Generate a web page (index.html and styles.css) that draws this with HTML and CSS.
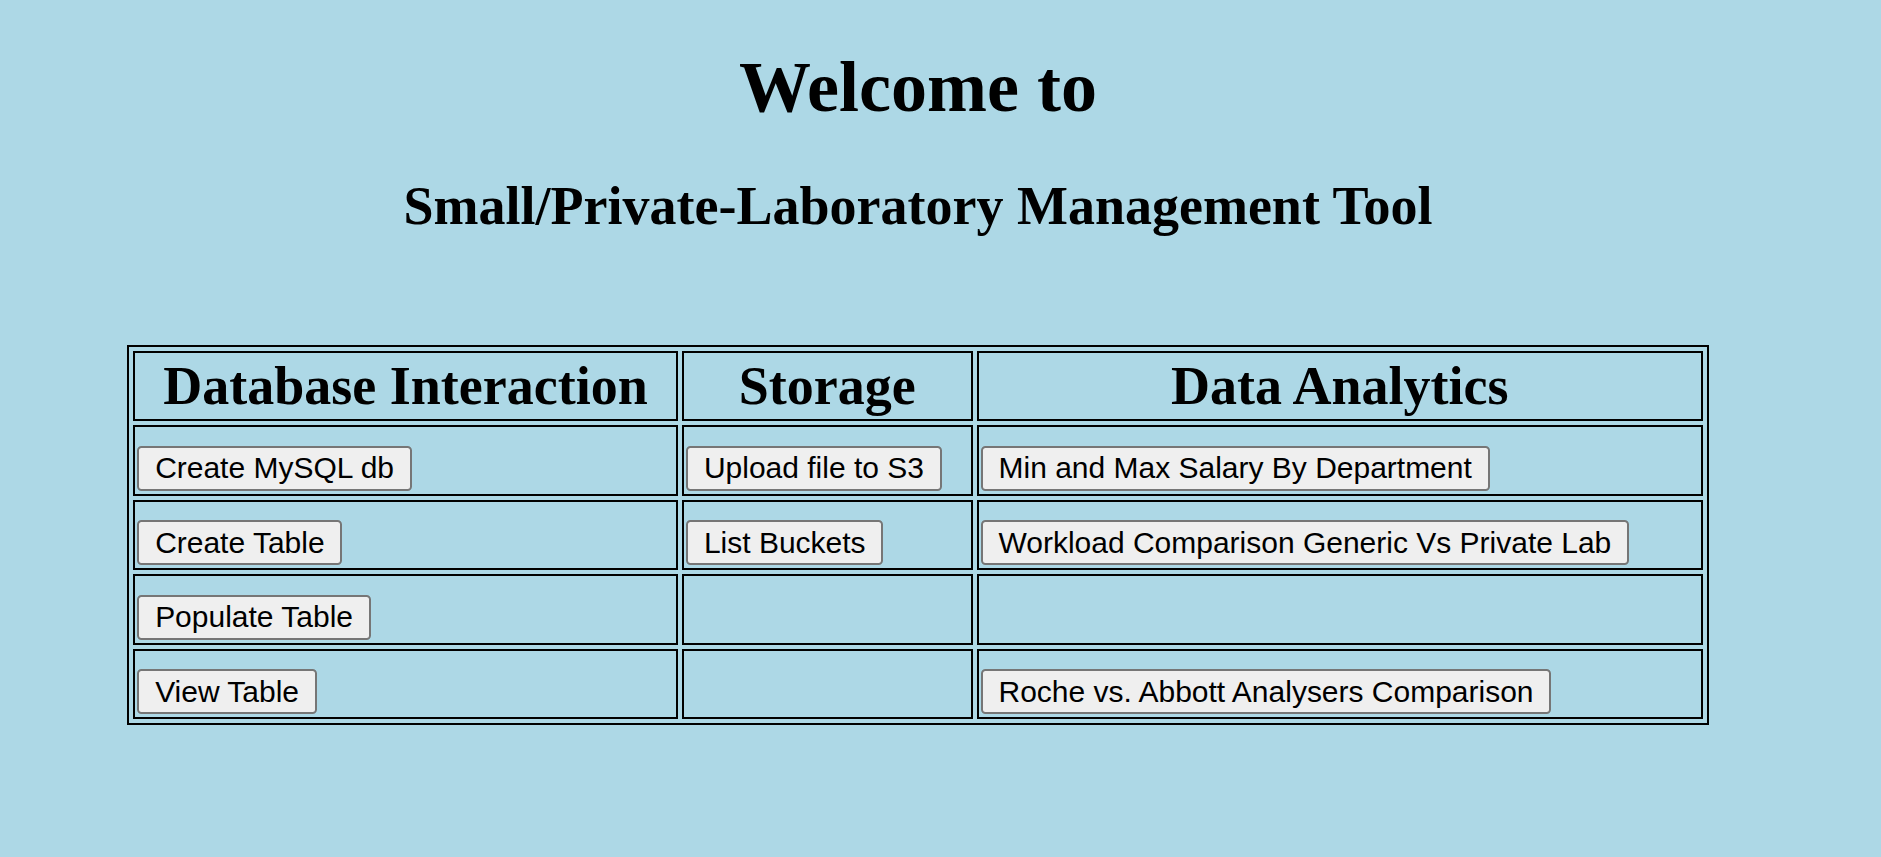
FILE: index.html
```html
<!DOCTYPE html>
<html>
<head>
<meta charset="utf-8">
<title>Small/Private-Laboratory Management Tool</title>
<link rel="stylesheet" href="styles.css">
</head>
<body>
<div class="page">
  <h1 class="title">Welcome to</h1>
  <h2 class="subtitle">Small/Private-Laboratory Management Tool</h2>
  <table class="tools">
    <thead>
      <tr>
        <th class="col-db">Database Interaction</th>
        <th class="col-st">Storage</th>
        <th class="col-da">Data Analytics</th>
      </tr>
    </thead>
    <tbody>
      <tr>
        <td><button class="btn">Create MySQL db</button></td>
        <td><button class="btn">Upload file to S3</button></td>
        <td><button class="btn">Min and Max Salary By Department</button></td>
      </tr>
      <tr>
        <td><button class="btn">Create Table</button></td>
        <td><button class="btn">List Buckets</button></td>
        <td><button class="btn">Workload Comparison Generic Vs Private Lab</button></td>
      </tr>
      <tr>
        <td><button class="btn">Populate Table</button></td>
        <td></td>
        <td></td>
      </tr>
      <tr>
        <td><button class="btn">View Table</button></td>
        <td></td>
        <td><button class="btn">Roche vs. Abbott Analysers Comparison</button></td>
      </tr>
    </tbody>
  </table>
</div>
</body>
</html>
```

FILE: styles.css
```css
html, body {
  background: #add8e6;
}
body {
  margin: 0;
  font-family: "Liberation Serif", "Times New Roman", serif;
  color: #000;
}
.page {
  zoom: 2.25;
  width: 800px;
  margin: 8px;
}
.title {
  font-size: 32px;
  font-weight: bold;
  text-align: center;
  margin: 20.4px 0 20.3px;
}
.subtitle {
  font-size: 24px;
  font-weight: bold;
  text-align: center;
  margin: 19.92px 0;
}
.tools {
  width: 703px;
  margin: 48px auto 0;
  border: 1px solid #000;
  border-spacing: 2px;
  border-collapse: separate;
}
.tools th,
.tools td {
  border: 1px solid #000;
  padding: 1px;
}
.tools th {
  font-size: 24px;
  font-weight: bold;
  text-align: center;
}
.tools td {
  font-size: 24px;
  text-align: left;
}
.col-db { width: 240px; }
.col-st { width: 126px; }
.col-da { width: 322px; }
.btn {
  font-family: "Liberation Sans", Arial, sans-serif;
  font-size: 13.333px;
  color: #000;
  background: #efefef;
  border: 1px solid #767676;
  border-radius: 2px;
  padding: 1.5px 7px;
  margin: 0;
}
```
